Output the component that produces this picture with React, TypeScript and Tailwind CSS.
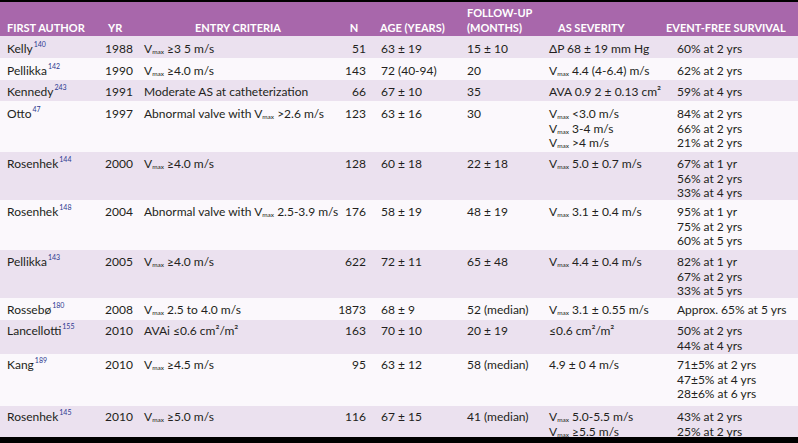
import React from 'react';

type Row = {
  author: string;
  ref: string;
  yr: string;
  entry: string;
  n: string;
  age: string;
  follow: string;
  severity: string[];
  survival: string[];
  h: string;
};

const rows: Row[] = [
  { author: 'Kelly', ref: '140', yr: '1988', entry: 'Vmax ≥3 5 m/s', n: '51', age: '63 ± 19', follow: '15 ± 10', severity: ['ΔP 68 ± 19 mm Hg'], survival: ['60% at 2 yrs'], h: 'h-[22px] pt-[6px]' },
  { author: 'Pellikka', ref: '142', yr: '1990', entry: 'Vmax ≥4.0 m/s', n: '143', age: '72 (40-94)', follow: '20', severity: ['Vmax 4.4 (4-6.4) m/s'], survival: ['62% at 2 yrs'], h: 'h-[22px] pt-[6px]' },
  { author: 'Kennedy', ref: '243', yr: '1991', entry: 'Moderate AS at catheterization', n: '66', age: '67 ± 10', follow: '35', severity: ['AVA 0.9 2 ± 0.13 cm²'], survival: ['59% at 4 yrs'], h: 'h-[21px] pt-[5px]' },
  { author: 'Otto', ref: '47', yr: '1997', entry: 'Abnormal valve with Vmax >2.6 m/s', n: '123', age: '63 ± 16', follow: '30', severity: ['Vmax <3.0 m/s', 'Vmax 3-4 m/s', 'Vmax >4 m/s'], survival: ['84% at 2 yrs', '66% at 2 yrs', '21% at 2 yrs'], h: 'h-[51px] pt-[6px]' },
  { author: 'Rosenhek', ref: '144', yr: '2000', entry: 'Vmax ≥4.0 m/s', n: '128', age: '60 ± 18', follow: '22 ± 18', severity: ['Vmax 5.0 ± 0.7 m/s'], survival: ['67% at 1 yr', '56% at 2 yrs', '33% at 4 yrs'], h: 'h-[48px] pt-[5px]' },
  { author: 'Rosenhek', ref: '148', yr: '2004', entry: 'Abnormal valve with Vmax 2.5-3.9 m/s', n: '176', age: '58 ± 19', follow: '48 ± 19', severity: ['Vmax 3.1 ± 0.4 m/s'], survival: ['95% at 1 yr', '75% at 2 yrs', '60% at 5 yrs'], h: 'h-[50px] pt-[5px]' },
  { author: 'Pellikka', ref: '143', yr: '2005', entry: 'Vmax ≥4.0 m/s', n: '622', age: '72 ± 11', follow: '65 ± 48', severity: ['Vmax 4.4 ± 0.4 m/s'], survival: ['82% at 1 yr', '67% at 2 yrs', '33% at 5 yrs'], h: 'h-[48px] pt-[5px]' },
  { author: 'Rossebø', ref: '180', yr: '2008', entry: 'Vmax 2.5 to 4.0 m/s', n: '1873', age: '68 ± 9', follow: '52 (median)', severity: ['Vmax 3.1 ± 0.55 m/s'], survival: ['Approx. 65% at 5 yrs'], h: 'h-[22px] pt-[5px]' },
  { author: 'Lancellotti', ref: '155', yr: '2010', entry: 'AVAi ≤0.6 cm²/m²', n: '163', age: '70 ± 10', follow: '20 ± 19', severity: ['≤0.6 cm²/m²'], survival: ['50% at 2 yrs', '44% at 4 yrs'], h: 'h-[34px] pt-[4px]' },
  { author: 'Kang', ref: '189', yr: '2010', entry: 'Vmax ≥4.5 m/s', n: '95', age: '63 ± 12', follow: '58 (median)', severity: ['4.9 ± 0 4 m/s'], survival: ['71±5% at 2 yrs', '47±5% at 4 yrs', '28±6% at 6 yrs'], h: 'h-[52px] pt-[4px]' },
  { author: 'Rosenhek', ref: '145', yr: '2010', entry: 'Vmax ≥5.0 m/s', n: '116', age: '67 ± 15', follow: '41 (median)', severity: ['Vmax 5.0-5.5 m/s', 'Vmax ≥5.5 m/s'], survival: ['43% at 2 yrs', '25% at 2 yrs'], h: 'h-[31px] pt-[4px]' },
];

// turns "Vmax" into V with a small subscript
function Fmt({ text }: { text: string }) {
  const parts = text.split('Vmax');
  return (
    <>
      {parts.map((p, i) => (
        <React.Fragment key={i}>
          {i > 0 && (
            <>
              V<sub className="text-[6.5px] -bottom-[1px]">max</sub>
            </>
          )}
          {p}
        </React.Fragment>
      ))}
    </>
  );
}

const cols = 'grid grid-cols-[100px_40px_196px_36px_90px_82px_122px_132px]';

export default function App() {
  return (
    <div className="w-[798px] h-[443px] bg-white overflow-hidden flex flex-col font-['Lato','Open_Sans',sans-serif] text-[#231f20]">
      <div className="h-[2px] bg-black shrink-0" />
      <div className={`${cols} h-[34px] shrink-0 bg-[#a867ab] text-white font-bold text-[11px] leading-[15px] items-end pb-[1px] whitespace-nowrap`}>
        <div className="pl-[7px]">FIRST AUTHOR</div>
        <div className="pl-[8px]">YR</div>
        <div className="text-center">ENTRY CRITERIA</div>
        <div className="text-center">N</div>
        <div className="pl-[8px]">AGE (YEARS)</div>
        <div className="pl-[5px]">
          FOLLOW-UP
          <br />
          (MONTHS)
        </div>
        <div className="pl-[14px]">AS SEVERITY</div>
        <div className="pl-0">EVENT-FREE SURVIVAL</div>
      </div>
      {rows.map((r, i) => (
        <div
          key={i}
          className={`${cols} ${r.h} shrink-0 text-[12px] leading-[14.5px] whitespace-nowrap ${i % 2 === 0 ? 'bg-[#ebe1ef]' : 'bg-[#fbf8fc]'}`}
        >
          <div className="pl-[7px]">
            {r.author}
            <sup className="text-[7px] -top-[6px] text-[#2b3990] ml-[1px]">{r.ref}</sup>
          </div>
          <div className="pl-[5px]">{r.yr}</div>
          <div className="pl-[4px]">
            <Fmt text={r.entry} />
          </div>
          <div className="pr-[6px] text-right">{r.n}</div>
          <div className="pl-[9px]">{r.age}</div>
          <div className="pl-[5px]">{r.follow}</div>
          <div className="pl-[5px]">
            {r.severity.map((s, j) => (
              <div key={j}>
                <Fmt text={s} />
              </div>
            ))}
          </div>
          <div className="pl-[11px]">
            {r.survival.map((s, j) => (
              <div key={j}>{s}</div>
            ))}
          </div>
        </div>
      ))}
      <div className="h-[6px] bg-black shrink-0" />
    </div>
  );
}
